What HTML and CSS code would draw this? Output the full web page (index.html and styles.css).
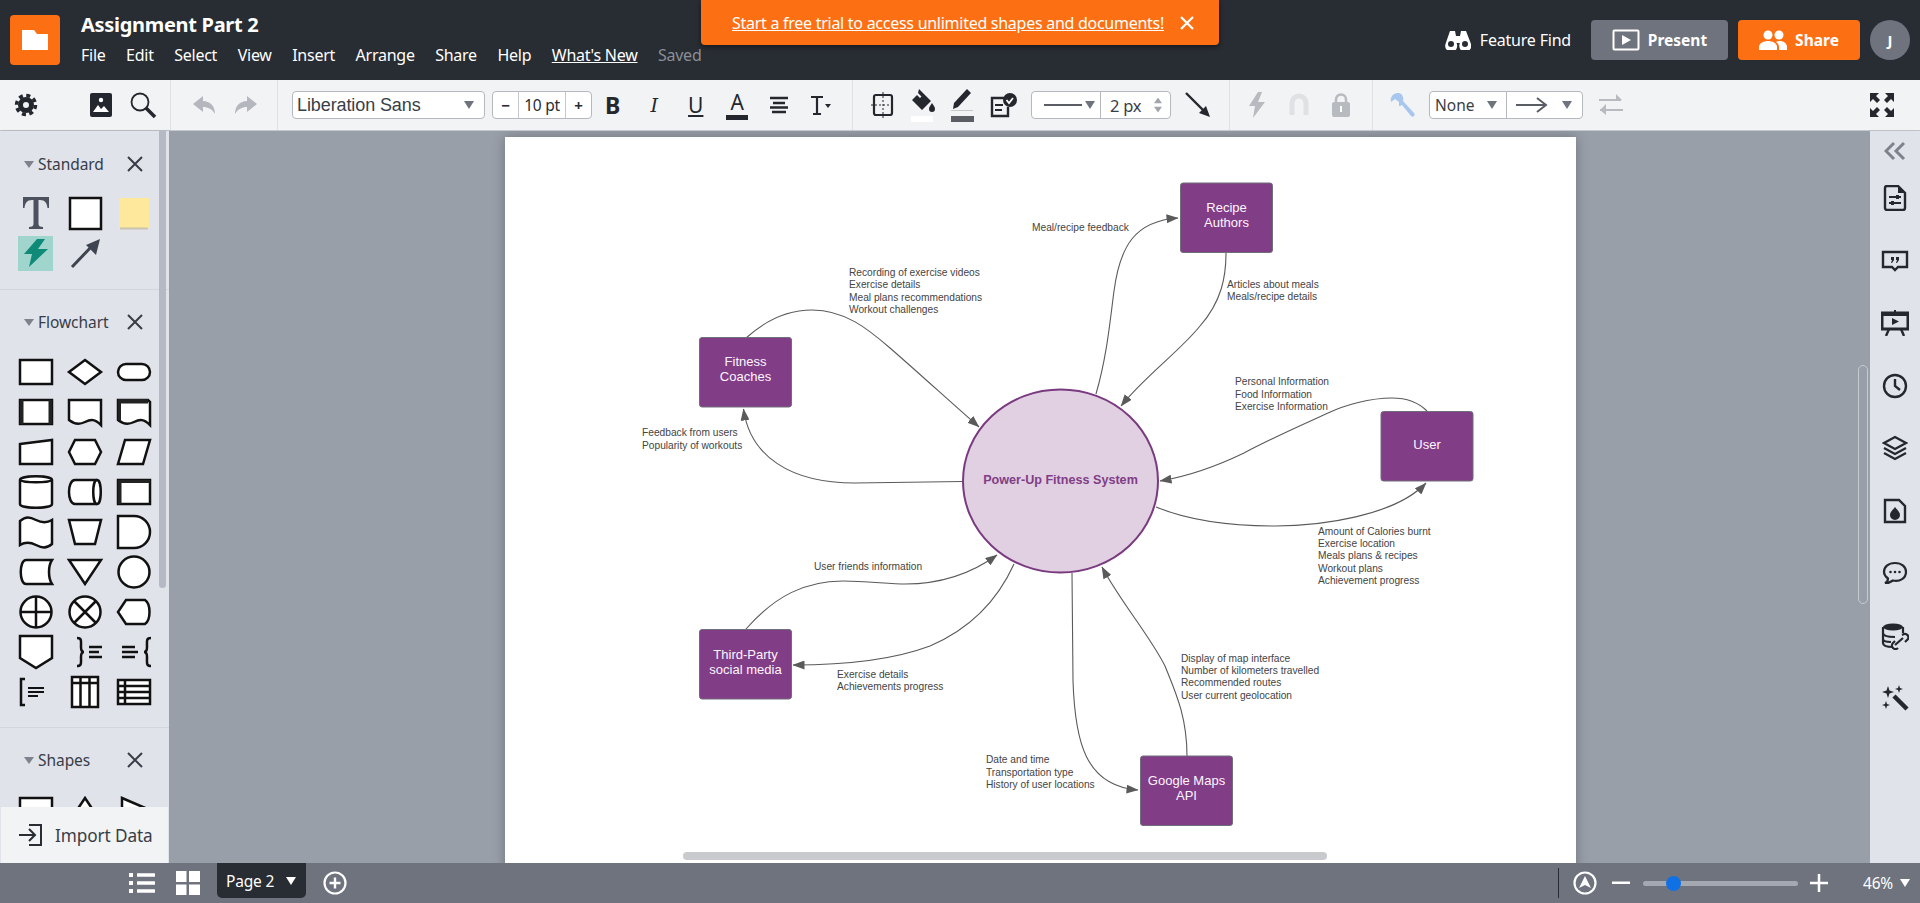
FILE: index.html
```html
<!DOCTYPE html>
<html lang="en">
<head>
<meta charset="utf-8">
<title>Assignment Part 2</title>
<link rel="stylesheet" href="styles.css">
</head>
<body>
<div class="app">
  <header class="topbar">
    <div class="logo"><svg width="26" height="20" viewBox="0 0 26 20"><path fill="#fff" d="M0 0H12L15 4H26V20H0Z"/></svg></div>
    <div class="doc">
      <div class="title">Assignment Part 2</div>
      <nav class="menu">
        <span>File</span><span>Edit</span><span>Select</span><span>View</span><span>Insert</span><span>Arrange</span><span>Share</span><span>Help</span><span class="new">What's New</span><span class="saved">Saved</span>
      </nav>
    </div>
    <div class="actions">
      <span class="find">
        <svg width="26" height="20" viewBox="0 0 26 20"><path fill="#fff" d="M5 1h5l1 5h4l1-5h5l5 13a6 6 0 1 1-11-1h-0.500l-3 0a6 6 0 1 1-11 1Z"/><circle cx="6" cy="14" r="3" fill="#282c33"/><circle cx="20" cy="14" r="3" fill="#282c33"/></svg>
        Feature Find
      </span>
      <span class="btn present">
        <svg width="28" height="22" viewBox="0 0 28 22"><rect x="1.500" y="1.500" width="25" height="19" rx="1" fill="none" stroke="#fff" stroke-width="2"/><path fill="#fff" d="M10 6l9 5-9 5Z"/></svg>
        Present
      </span>
      <span class="btn share">
        <svg width="28" height="20" viewBox="0 0 28 20"><circle cx="9" cy="5" r="4.500" fill="#fff"/><circle cx="20" cy="5" r="4.500" fill="#fff"/><path fill="#fff" d="M0 20v-3c0-4 5-6 9-6s9 2 9 6v3Z"/><path fill="#fff" d="M20 20v-3c0-2-1-4-3-5 1-1 2-1 4-1 3 0 7 2 7 6v3Z"/></svg>
        Share
      </span>
      <span class="avatar">J</span>
    </div>
  </header>

  <div class="banner"><a class="banner-link">Start a free trial to access unlimited shapes and documents!</a>
    <svg class="banner-x" width="16" height="16" viewBox="0 0 16 16"><path d="M2 2L14 14M14 2L2 14" stroke="#fff" stroke-width="2.200"/></svg>
  </div>

  <div class="toolbar">
    <div class="tsec s1">
      <span class="tb"><svg width="24" height="24" viewBox="0 0 24 24"><circle cx="12" cy="12" r="5.500" fill="none" stroke="#24272d" stroke-width="5"/><circle cx="12" cy="12" r="9.500" fill="none" stroke="#24272d" stroke-width="3.500" stroke-dasharray="4 3.460"/></svg></span>
      <span class="tb push"><svg width="24" height="26" viewBox="0 0 24 26"><rect x="1" y="1" width="22" height="24" rx="2" fill="#24272d"/><circle cx="12" cy="8" r="2.200" fill="#fff"/><path fill="#fff" d="M4 20l5-7 3 4 3-3 5 6Z"/></svg></span>
      <span class="tb"><svg width="28" height="28" viewBox="0 0 28 28"><circle cx="11" cy="11" r="8.500" fill="none" stroke="#24272d" stroke-width="1.800"/><path d="M17 17L26 26" stroke="#24272d" stroke-width="3.500"/></svg></span>
    </div>
    <div class="tsec s2">
      <span class="tb"><svg width="24" height="20" viewBox="0 0 24 20"><path fill="#b4b7bd" d="M11 1L1 9l10 8v-5c5 0 9 2 12 7 0-8-5-13-12-13Z"/></svg></span>
      <span class="tb"><svg width="24" height="20" viewBox="0 0 24 20"><path fill="#b4b7bd" d="M13 1l10 8-10 8v-5C8 12 4 14 1 19 1 11 6 6 13 6Z"/></svg></span>
    </div>
    <div class="tsec s3">
      <span class="select font">Liberation Sans<i class="caret"></i></span>
      <span class="stepper"><b>−</b><em>10 pt</em><b>+</b></span>
      <span class="tb glyph bold">B</span>
      <span class="tb glyph ital">I</span>
      <span class="tb glyph under">U</span>
      <span class="tb glyph colorA">A</span>
      <span class="tb"><svg width="20" height="18" viewBox="0 0 20 18"><path d="M1 2H19M4 7H16M1 11.500H19M3 16H17" stroke="#24272d" stroke-width="2.400"/></svg></span>
      <span class="tb"><svg width="24" height="24" viewBox="0 0 24 24"><path d="M3 4H15M9 4V21M5 21H13" stroke="#24272d" stroke-width="2.200" fill="none"/><path d="M17 11H23L20 15Z" fill="#24272d"/></svg></span>
    </div>
    <div class="tsec s4">
      <span class="tb t40"><svg width="24" height="26" viewBox="0 0 24 26"><rect x="3" y="3" width="18" height="20" rx="2" fill="none" stroke="#24272d" stroke-width="2.200"/><path d="M12 0V26M0 13H24" stroke="#24272d" stroke-width="1" stroke-dasharray="2 2"/></svg></span>
      <span class="tb t40"><svg width="26" height="34" viewBox="0 0 26 34"><path fill="#24272d" d="M9 1l12 12-9 9-10-10 5-5 3 3 1.500-1.500-3.500-3.500Z"/><path fill="#24272d" d="M22 15c2 3 3 4 3 6a3 3 0 0 1-6 0c0-2 1-3 3-6Z"/><rect x="1" y="28" width="22" height="6" fill="#fff"/></svg></span>
      <span class="tb t40"><svg width="24" height="34" viewBox="0 0 24 34"><path fill="#24272d" d="M16 1l4 4L7 19l-5 2 1-6Z"/><rect y="22" x="0" width="22" height="1" fill="#c6c8cc"/><rect x="0" y="28" width="23" height="6" fill="#5a5d63"/></svg></span>
      <span class="tb t40"><svg width="28" height="26" viewBox="0 0 28 26"><path fill="none" stroke="#24272d" stroke-width="2.400" d="M15 6H3V24H19V15"/><path d="M6 13H14M6 18H13" stroke="#24272d" stroke-width="2"/><circle cx="21" cy="8" r="7" fill="#24272d"/><path d="M17.500 8l2.500 3 4-5" stroke="#fff" stroke-width="1.800" fill="none"/></svg></span>
      <span class="select line"><span class="line-l"><i class="dash"></i><i class="caret"></i></span><span class="line-r">2 px<i class="spin"></i></span></span>
      <span class="tb t40 after-line"><svg width="26" height="26" viewBox="0 0 26 26"><path d="M1 1L20 20" stroke="#24272d" stroke-width="2.400"/><path d="M25 25L14 21L21 14Z" fill="#24272d"/></svg></span>
    </div>
    <div class="tsec s5">
      <span class="tb"><svg width="16" height="26" viewBox="0 0 16 26"><path fill="#b7babf" d="M9 0L0 14h6L4 26l12-16H9L13 0Z"/></svg></span>
      <span class="tb"><svg width="20" height="24" viewBox="0 0 20 24"><path fill="none" stroke="#dfe1e5" stroke-width="5" d="M3 22V10a7 7 0 0 1 14 0V22"/></svg></span>
      <span class="tb"><svg width="18" height="24" viewBox="0 0 18 24"><path fill="none" stroke="#b7babf" stroke-width="2.500" d="M4 10V6.500a5 5 0 0 1 10 0V10"/><rect x="0" y="9" width="18" height="15" rx="2" fill="#b7babf"/><rect x="8" y="13" width="2" height="6" fill="#fff"/></svg></span>
    </div>
    <div class="tsec s6">
      <span class="tb"><svg width="26" height="26" viewBox="0 0 26 26"><path fill="#a7c7ee" d="M9 1a7 7 0 0 0-7 9l4-3 4 3 0 4a7 7 0 0 0 3-1l9 11c2 2 5-1 3-3L14 9c1-4-1-8-5-8Z"/></svg></span>
      <span class="select ends"><span class="end-l">None<i class="caret"></i></span><span class="end-r"><svg width="32" height="16" viewBox="0 0 32 16"><path d="M0 8H30M21 1L30 8L21 15" fill="none" stroke="#5a5d63" stroke-width="2"/></svg><i class="caret"></i></span></span>
      <span class="tb after-line"><svg width="24" height="22" viewBox="0 0 24 22"><path d="M0 6H22M1 16H24" stroke="#b7babf" stroke-width="2"/><path fill="#b7babf" d="M17 0L23 6L17 7ZM7 10L1 16L7 21Z"/></svg></span>
      <span class="tb full"><svg width="24" height="24" viewBox="0 0 24 24"><path fill="#24272d" d="M0 0H9L6 3L10 7L7 10L3 6L0 9ZM24 0V9L21 6L17 10L14 7L18 3L15 0ZM0 24V15L3 18L7 14L10 17L6 21L9 24ZM24 24H15L18 21L14 17L17 14L21 18L24 15Z"/></svg></span>
    </div>
  </div>

  <div class="work">
    <aside class="lib">
      <section class="libsec first">
        <h3 class="libhead"><i class="tri"></i>Standard<svg class="x" width="16" height="16" viewBox="0 0 16 16"><path d="M1 1L15 15M15 1L1 15" stroke="#383d47" stroke-width="2"/></svg></h3>
        <div class="shapes">
          <svg width="40" height="40" viewBox="0 0 40 40"><path fill="#4b525e" d="M7 4H33V15H31.500C31 10 29 7 24 7H22.500V31C22.500 33 24 34 27 34V36H13V34C16 34 17.500 33 17.500 31V7H16C11 7 9 10 8.500 15H7Z"/></svg>
          <svg class="sh" width="40" height="40" viewBox="0 0 40 40"><rect x="5" y="5" width="31" height="31"/></svg>
          <svg width="40" height="40" viewBox="0 0 40 40"><rect x="5" y="5" width="30" height="30" fill="#fde89b"/><rect x="6" y="34.500" width="28" height="2" fill="#c9c4ae"/></svg>
          <span class="teal"><svg width="26" height="28" viewBox="0 0 26 28"><path fill="#0f8a78" d="M14 0L1 15h8L6 28 25 10H15L22 0Z"/></svg></span>
          <svg width="40" height="40" viewBox="0 0 40 40"><path d="M7 34L28 12" stroke="#3f4550" stroke-width="3"/><path fill="#3f4550" d="M35 6L31 22L21 12Z"/></svg>
        </div>
      </section>
      <section class="libsec">
        <h3 class="libhead"><i class="tri"></i>Flowchart<svg class="x" width="16" height="16" viewBox="0 0 16 16"><path d="M1 1L15 15M15 1L1 15" stroke="#383d47" stroke-width="2"/></svg></h3>
        <div class="shapes sh">
          <svg viewBox="0 0 40 40"><rect x="4" y="8" width="32" height="24"/></svg>
          <svg viewBox="0 0 40 40"><path d="M20 8L36 20L20 32L4 20Z"/></svg>
          <svg viewBox="0 0 40 40"><rect x="4" y="12" width="32" height="16" rx="8"/></svg>

          <svg viewBox="0 0 40 40"><rect x="4" y="8" width="32" height="24"/><path class="solid" d="M4 8H7.500V32H4ZM32.500 8H36V32H32.500Z"/></svg>
          <svg viewBox="0 0 40 40"><path d="M4 8H36V33C30 27 26 27 20 30C14 33 9 32 4 28Z"/></svg>
          <svg viewBox="0 0 40 40"><path d="M4 8H34L36 10V33C30 27 26 27 20 30C14 33 9 32 4 28Z"/><path class="solid" d="M4 7H34V11.500H7V28H4Z"/></svg>

          <svg viewBox="0 0 40 40"><path d="M4 12L36 8V32H4Z"/></svg>
          <svg viewBox="0 0 40 40"><path d="M10 8H30L36 20L30 32H10L4 20Z"/></svg>
          <svg viewBox="0 0 40 40"><path d="M11 8H36L29 32H4Z"/></svg>

          <svg viewBox="0 0 40 40"><path d="M4 8C4 3 36 3 36 8V32C36 37 4 37 4 32Z"/><path d="M4 8C8 11 32 11 36 8" fill="none"/></svg>
          <svg viewBox="0 0 40 40"><path d="M10 8H32C37 8 37 32 32 32H10C2 32 2 8 10 8Z"/><path d="M32 8C27 8 27 32 32 32" fill="none"/></svg>
          <svg viewBox="0 0 40 40"><rect x="4" y="8" width="32" height="24"/><path class="solid" d="M4 8H36V11H7.500V32H4Z"/></svg>

          <svg viewBox="0 0 40 40"><path d="M4 9C10 4 14 5 20 8C26 11 31 11 36 8V32C30 37 26 36 20 33C14 30 9 30 4 33Z"/></svg>
          <svg viewBox="0 0 40 40"><path d="M4 8H36L30 32H10Z"/></svg>
          <svg viewBox="0 0 40 40"><path d="M4 4H20A16 16 0 0 1 20 36H4Z"/></svg>

          <svg viewBox="0 0 40 40"><path d="M10 8H36C32 14 32 26 36 32H10C3 32 3 8 10 8Z"/></svg>
          <svg viewBox="0 0 40 40"><path d="M4 8H36L20 32Z"/></svg>
          <svg viewBox="0 0 40 40"><circle cx="20" cy="20" r="15.500"/></svg>

          <svg viewBox="0 0 40 40"><circle cx="20" cy="20" r="15.500"/><path d="M20 4.500V35.500M4.500 20H35.500"/></svg>
          <svg viewBox="0 0 40 40"><circle cx="20" cy="20" r="15.500"/><path d="M9 9L31 31M31 9L9 31"/></svg>
          <svg viewBox="0 0 40 40"><path d="M12 8H31C37 12 37 28 31 32H12L4 20Z"/></svg>

          <svg viewBox="0 0 40 40"><path d="M4 4H36V26L20 36L4 26Z"/></svg>
          <svg viewBox="0 0 40 40"><path class="open" d="M12 6C17 6 16 9 16 15C16 18 17 20 19 20C17 20 16 22 16 25C16 31 17 34 12 34"/><path class="open" d="M24 15H37M24 20H34M24 25H37"/></svg>
          <svg viewBox="0 0 40 40"><path class="open" d="M37 6C32 6 33 9 33 15C33 18 32 20 30 20C32 20 33 22 33 25C33 31 32 34 37 34"/><path class="open" d="M8 15H21M8 20H24M8 25H21"/></svg>

          <svg viewBox="0 0 40 40"><path class="open" d="M9 7H5V33H9"/><path class="open thin" d="M12 16H28M12 20H28M12 24H22"/></svg>
          <svg viewBox="0 0 40 40"><rect x="7" y="5" width="26" height="30"/><path class="open" d="M7 11H33M15.500 5V35M24.500 5V35"/></svg>
          <svg viewBox="0 0 40 40"><rect x="4" y="8" width="32" height="24"/><path class="open" d="M4 14H36M4 20H36M4 26H36M11 8V32"/></svg>
        </div>
      </section>
      <section class="libsec last">
        <h3 class="libhead"><i class="tri"></i>Shapes<svg class="x" width="16" height="16" viewBox="0 0 16 16"><path d="M1 1L15 15M15 1L1 15" stroke="#383d47" stroke-width="2"/></svg></h3>
        <div class="shapes sh">
          <svg viewBox="0 0 40 40"><rect x="4" y="8" width="32" height="24"/></svg>
          <svg viewBox="0 0 40 40"><path d="M20 8L36 32H4Z"/></svg>
          <svg viewBox="0 0 40 40"><path d="M8 8L36 20L8 32Z"/></svg>
        </div>
      </section>
      <div class="libscroll"></div>
      <div class="import">
        <svg width="24" height="22" viewBox="0 0 24 22"><path d="M10 1H22V21H10" fill="none" stroke="#282c33" stroke-width="2"/><path d="M0 11H15M10 5L16 11L10 17" fill="none" stroke="#282c33" stroke-width="2"/></svg>
        Import Data
      </div>
    </aside>

    <main class="canvas">
      <div class="page">
        <svg class="diagram" width="1071" height="727" viewBox="505 136 1071 727">
          <defs>
            <marker id="ah" markerUnits="userSpaceOnUse" markerWidth="12" markerHeight="9" refX="11.500" refY="4.500" orient="auto"><path d="M0 0L12 4.500L0 9Z" fill="#5a5a5a"/></marker>
          </defs>
          <g class="links">
            <path marker-end="url(#ah)" d="M746 337C767 318 790 309 812 309C845 309 868 328 890 347C912 366 955 405 979 426"/>
            <path marker-end="url(#ah)" d="M962.500 480.500L855 482C790 482 750 455 743.500 408"/>
            <path marker-end="url(#ah)" d="M1096 393C1107 355 1110 320 1114 290C1120 245 1135 220 1178 217"/>
            <path marker-end="url(#ah)" d="M1226 252C1226 275 1222 300 1200 325C1180 350 1145 375 1121 405"/>
            <path marker-end="url(#ah)" d="M1427 410C1417 400 1405 397 1392 397C1370 397 1345 404 1328 412C1300 425 1270 438 1244 452C1215 466 1190 475 1160 480"/>
            <path marker-end="url(#ah)" d="M1156 506C1190 520 1235 525 1275 525C1320 525 1395 515 1426 482"/>
            <path marker-end="url(#ah)" d="M1187 755C1187 715 1175 690 1165 665C1150 635 1120 600 1102 566"/>
            <path marker-end="url(#ah)" d="M1072 572L1073 680C1075 740 1085 785 1138 789"/>
            <path marker-end="url(#ah)" d="M746 628C775 595 805 580 843 580C865 580 890 583 905 583C945 583 975 570 997 554"/>
            <path marker-end="url(#ah)" d="M1014 563C995 605 965 630 930 645C890 660 840 664 793 664"/>
          </g>
          <ellipse class="hub" cx="1060.500" cy="480" rx="97.500" ry="91.500"/>
          <text class="hubt" x="1060.500" y="483">Power-Up Fitness System</text>

          <rect class="node" x="699.500" y="336.500" width="92" height="69.500" rx="2.500"/>
          <text class="nodet" x="745.500" y="365">Fitness</text><text class="nodet" x="745.500" y="380">Coaches</text>
          <rect class="node" x="1180.500" y="182" width="92" height="69.500" rx="2.500"/>
          <text class="nodet" x="1226.500" y="211">Recipe</text><text class="nodet" x="1226.500" y="226">Authors</text>
          <rect class="node" x="1381" y="410.500" width="92" height="69.500" rx="2.500"/>
          <text class="nodet" x="1427" y="448">User</text>
          <rect class="node" x="699.500" y="628.500" width="92" height="69.500" rx="2.500"/>
          <text class="nodet" x="745.500" y="658">Third-Party</text><text class="nodet" x="745.500" y="673">social media</text>
          <rect class="node" x="1140.500" y="755" width="92" height="69.500" rx="2.500"/>
          <text class="nodet" x="1186.500" y="784">Google Maps</text><text class="nodet" x="1186.500" y="798.500">API</text>

          <g class="labels">
            <text x="1032" y="230">Meal/recipe feedback</text>
            <text x="849" y="275">Recording of exercise videos</text><text x="849" y="287">Exercise details</text><text x="849" y="300">Meal plans recommendations</text><text x="849" y="312">Workout challenges</text>
            <text x="1227" y="287">Articles about meals</text><text x="1227" y="299">Meals/recipe details</text>
            <text x="1235" y="384">Personal Information</text><text x="1235" y="397">Food Information</text><text x="1235" y="409">Exercise Information</text>
            <text x="642" y="435">Feedback from users</text><text x="642" y="448">Popularity of workouts</text>
            <text x="1318" y="534">Amount of Calories burnt</text><text x="1318" y="546">Exercise location</text><text x="1318" y="558">Meals plans &amp; recipes</text><text x="1318" y="571">Workout plans</text><text x="1318" y="583">Achievement progress</text>
            <text x="814" y="569">User friends information</text>
            <text x="837" y="677">Exercise details</text><text x="837" y="689">Achievements progress</text>
            <text x="1181" y="661">Display of map interface</text><text x="1181" y="673">Number of kilometers travelled</text><text x="1181" y="685">Recommended routes</text><text x="1181" y="698">User current geolocation</text>
            <text x="986" y="762">Date and time</text><text x="986" y="775">Transportation type</text><text x="986" y="787">History of user locations</text>
          </g>
        </svg>
      </div>
      <div class="hscroll"></div>
      <div class="vscroll"></div>
    </main>

    <aside class="rail">
      <span class="chev"><svg width="22" height="20" viewBox="0 0 22 20"><path d="M10 2L2 10L10 18M20 2L12 10L20 18" fill="none" stroke="#7d828c" stroke-width="3"/></svg></span>
      <span class="ri"><svg width="24" height="26" viewBox="0 0 24 26"><path fill="none" stroke="#24272d" stroke-width="2.400" d="M2 3a2 2 0 0 1 2-2H15L22 8V23a2 2 0 0 1-2 2H4a2 2 0 0 1-2-2Z"/><path d="M15 1V8H22" fill="#24272d"/><path d="M6 12H18M6 18H18" stroke="#24272d" stroke-width="1.800"/><path d="M13 10h3v4h-3ZM8 16h3v4H8Z" fill="#24272d"/></svg></span>
      <span class="ri"><svg width="28" height="22" viewBox="0 0 28 22"><path fill="none" stroke="#24272d" stroke-width="2.400" d="M2 2H26V17H17L14 20L11 17H2Z"/><path d="M10 7h3v3l-2 3h-1l1-3h-1ZM15 7h3v3l-2 3h-1l1-3h-1Z" fill="#24272d"/></svg></span>
      <span class="ri"><svg width="28" height="26" viewBox="0 0 28 26"><path d="M14 0V3" stroke="#24272d" stroke-width="2"/><path d="M1 3H27V19H1Z" fill="none" stroke="#24272d" stroke-width="3"/><path d="M1 3H27V6H1ZM11 8L18 11.500L11 15Z" fill="#24272d"/><path d="M8 19L5 26M20 19L23 26" stroke="#24272d" stroke-width="2.400"/></svg></span>
      <span class="ri"><svg width="26" height="26" viewBox="0 0 26 26"><circle cx="13" cy="13" r="11" fill="none" stroke="#24272d" stroke-width="2.400"/><path d="M13 6V13L18 17" fill="none" stroke="#24272d" stroke-width="2.400"/></svg></span>
      <span class="ri"><svg width="26" height="26" viewBox="0 0 26 26"><path d="M13 2L24 8L13 14L2 8Z" fill="none" stroke="#24272d" stroke-width="2.200"/><path d="M2 13L13 19L24 13M2 18L13 24L24 18" fill="none" stroke="#24272d" stroke-width="2.200"/></svg></span>
      <span class="ri"><svg width="24" height="26" viewBox="0 0 24 26"><path fill="none" stroke="#24272d" stroke-width="2.400" d="M2 2H16L22 8V24H2Z"/><path fill="#24272d" d="M12 9c3 4 5 5 5 8a5 5 0 0 1-10 0c0-3 2-4 5-8Z"/></svg></span>
      <span class="ri"><svg width="26" height="24" viewBox="0 0 26 24"><path fill="none" stroke="#24272d" stroke-width="2.200" d="M13 2C6 2 2 6 2 11C2 14 4 16 6 17.500C6 19 5 21 3 22C7 22 9 21 11 19.500C18 21 24 17 24 11C24 6 20 2 13 2Z"/><circle cx="8.500" cy="11" r="1.300" fill="#24272d"/><circle cx="13" cy="11" r="1.300" fill="#24272d"/><circle cx="17.500" cy="11" r="1.300" fill="#24272d"/></svg></span>
      <span class="ri"><svg width="28" height="28" viewBox="0 0 28 28"><ellipse cx="12" cy="5" rx="10" ry="3.500" fill="#24272d"/><path d="M2 5V21C2 24 7 25 12 25M22 5V11M2 11C2 14 8 15 14 15M2 17C2 19 6 20 10 20" fill="none" stroke="#24272d" stroke-width="2.200"/><path d="M14 23L22 16M17 26a3.500 3.500 0 0 1-5-5l2-2M21 13l2-1a3.500 3.500 0 0 1 4 5l-3 3" fill="none" stroke="#24272d" stroke-width="2.200"/></svg></span>
      <span class="ri"><svg width="28" height="28" viewBox="0 0 28 28"><path d="M13 12L26 25" stroke="#24272d" stroke-width="4.500"/><path fill="#24272d" d="M7 2l1.500 4.500L13 8 8.500 9.500 7 14 5.500 9.500 1 8 5.500 6.500ZM18 1l1 3 3 1-3 1-1 3-1-3-3-1 3-1ZM5 17l1 3 3 1-3 1-1 3-1-3-3-1 3-1Z"/></svg></span>
    </aside>
  </div>

  <footer class="bottom">
    <span class="bi list"><svg width="26" height="22" viewBox="0 0 26 22"><path d="M8 3H26M8 11H26M8 19H26" stroke="#fff" stroke-width="3.500"/><path d="M0 1h4v4H0ZM0 9h4v4H0ZM0 17h4v4H0Z" fill="#fff"/></svg></span>
    <span class="bi grid"><svg width="24" height="24" viewBox="0 0 24 24"><path fill="#fff" d="M0 0h10.500v11H0ZM13 0h11v11H13ZM0 13.500h10.500V24H0ZM13 13.500h11V24H13Z"/></svg></span>
    <span class="pagetab">Page 2<i class="caret white"></i></span>
    <span class="bi addp"><svg width="24" height="24" viewBox="0 0 24 24"><circle cx="12" cy="12" r="10.500" fill="none" stroke="#fff" stroke-width="2.200"/><path d="M12 6.500V17.500M6.500 12H17.500" stroke="#fff" stroke-width="2.400"/></svg></span>
    <span class="zoombox">
      <span class="vsep"></span>
      <svg class="nav" width="24" height="24" viewBox="0 0 24 24"><circle cx="12" cy="12" r="10.500" fill="none" stroke="#fff" stroke-width="2.200"/><path d="M12 5L18 17L12 14L6 17Z" fill="#fff"/></svg>
      <svg class="minus" width="18" height="4" viewBox="0 0 18 4"><rect width="18" height="2.500" y="0.500" fill="#fff"/></svg>
      <span class="slider"><i class="knob"></i></span>
      <svg class="plus" width="18" height="18" viewBox="0 0 18 18"><path d="M0 9H18M9 0V18" stroke="#fff" stroke-width="2.500"/></svg>
      <span class="pct">46%</span><i class="caret white"></i>
    </span>
  </footer>
</div>
</body>
</html>
```
FILE: styles.css
```css
*{box-sizing:border-box}
html,body{margin:0;padding:0;height:100%;overflow:hidden}
body{font-family:"Noto Sans","Open Sans",sans-serif;color:#282c33;background:#999fa9}
.app{position:relative;width:1920px;height:903px;display:flex;flex-direction:column;overflow:hidden}

.topbar{height:80px;background:#282c33;display:flex;align-items:flex-start;color:#fff;flex:none}
.logo{width:50px;height:50px;margin:15px 0 0 10px;background:#fc7013;border-radius:4px;display:flex;align-items:center;justify-content:center}
.doc{margin-left:21px;padding-top:11px}
.title{font-size:20px;font-weight:700;line-height:28px;letter-spacing:-.3px}
.menu{display:flex;gap:20.500px;font-size:16px;line-height:22px;margin-top:5px;letter-spacing:-.25px}
.menu .new{text-decoration:underline;margin-left:0}
.menu .saved{color:#8b8f97}
.actions{margin-left:auto;display:flex;align-items:center;height:80px;padding-right:10px;font-size:16px}
.find{display:flex;align-items:center;gap:9px;margin-right:20px;letter-spacing:-.2px}
.btn{height:40px;border-radius:4px;display:flex;align-items:center;justify-content:center;font-weight:700;gap:8px;font-size:15.500px}
.present{width:137px;background:#6e737e;margin-right:10px}
.share{width:122px;background:#fc7013;margin-right:10px}
.avatar{width:40px;height:40px;border-radius:50%;background:#6e737e;display:flex;align-items:center;justify-content:center;font-weight:700;font-size:15px}

.banner{position:absolute;left:701px;top:0;width:518px;height:45px;background:#fc7013;border-radius:0 0 4px 4px;box-shadow:0 2px 5px rgba(0,0,0,.45);display:flex;align-items:center;padding-left:31px;color:#fff;z-index:5}
.banner-link{font-size:16px;text-decoration:underline;letter-spacing:-.27px;white-space:nowrap}
.banner-x{margin-left:15px}

.toolbar{height:51px;background:#f2f3f5;border-bottom:1px solid #c5c8cf;display:flex;flex:none}
.tsec{display:flex;align-items:center;border-right:1px solid #dfe1e5;height:50px}
.s1{width:171px;padding-left:5px}
.s2{width:107px;padding-left:12px}
.s3{width:575px;padding-left:14px}
.s3 .tb{width:41.500px}
.s4{width:377px;padding-left:10px}
.s5{width:143px;padding-left:6px}
.s6{flex:1;border-right:0;padding-left:8px;padding-right:17px}
.tb{width:42px;height:40px;display:flex;align-items:center;justify-content:center;flex:none}
.t40{width:40px}
.after-line{margin-left:7px}
.push{margin-left:33px;margin-right:0}
.select{display:flex;align-items:center;height:28px;background:#fff;border:1px solid #b5b8bf;border-radius:4px;flex:none}
.font{width:193px;padding:0 6px 0 4px;font-family:"Liberation Sans",sans-serif;font-size:18px;color:#3a3e46;justify-content:space-between;letter-spacing:-.1px}
.caret{display:inline-block;width:0;height:0;border-left:5.500px solid transparent;border-right:5.500px solid transparent;border-top:8px solid #6e737e;margin-right:4px}
.caret.white{border-top-color:#fff;margin:0}
.stepper{display:flex;width:100px;height:28px;margin-left:7px;background:#fff;border:1px solid #b5b8bf;border-radius:4px;flex:none;font-size:15.500px;align-items:center}
.stepper b{width:25px;text-align:center;font-weight:700;font-size:15px}
.stepper em{font-style:normal;flex:1;text-align:center;height:26px;line-height:26px;border-left:1px solid #c5c8cf;border-right:1px solid #c5c8cf;letter-spacing:-.3px}
.glyph{color:#24272d}
.bold{font-size:23px;font-weight:700}
.ital{font-family:"DejaVu Serif",serif;font-style:italic;font-size:19px}
.under{font-size:21px;text-decoration:underline;font-weight:400}
.colorA{font-size:21px;flex-direction:column;line-height:22px;position:relative}
.colorA::after{content:"";display:block;width:22px;height:5px;background:#24272d;margin-top:2px}
.line{width:140px;margin-left:8px}
.line-l{width:69px;display:flex;align-items:center;justify-content:space-between;padding:0 5px 0 12px;height:26px;border-right:1px solid #b5b8bf}
.dash{display:block;width:38px;height:2px;background:#5a5d63}
.line .caret{margin-right:0;border-left-width:5px;border-right-width:5px}
.line-r{flex:1;display:flex;justify-content:space-between;align-items:center;padding:0 8px 0 9px;font-size:16.500px;letter-spacing:-.3px;color:#3a3e46}
.spin{display:block;width:8px;height:15px;background:#a2a5ab;clip-path:polygon(50% 0,100% 38%,0 38%,0 62%,100% 62%,50% 100%,0 62%,0 38%)}
.s6 .select{margin-left:6px}
.ends{width:154px}
.end-l{width:77px;height:26px;border-right:1px solid #b5b8bf;display:flex;align-items:center;justify-content:space-between;padding:0 9px 0 5px;font-size:15.500px;color:#3a3e46}
.end-l .caret,.end-r .caret{margin:0}
.end-r{flex:1;display:flex;align-items:center;justify-content:space-between;padding:0 10px 0 9px}
.full{margin-left:auto}

.work{flex:1;display:flex;min-height:0}
.lib{width:169px;background:#e0e3ea;position:relative;overflow:hidden;flex:none;box-shadow:1px 0 2px rgba(0,0,0,.2)}
.libsec{border-bottom:1px solid #d1d5dd;padding:17px 0 15px}
.libsec.first{padding:18px 0 16px;height:159px}
.libsec.last{border:0;padding-top:17px}
.libhead{margin:0;display:flex;align-items:center;height:30px;font-size:15.500px;font-weight:400;color:#383d47;padding-left:24px;position:relative;letter-spacing:-.05px}
.tri{width:0;height:0;border-left:5px solid transparent;border-right:5px solid transparent;border-top:7px solid #7d828c;margin-right:4px}
.x{position:absolute;left:127px;top:7px}
.shapes{display:grid;grid-template-columns:repeat(3,49px);grid-auto-rows:40px;padding-left:11px;margin-top:15px;justify-items:center;align-items:center}
.first .shapes{margin-top:14px}
.shapes svg{width:40px;height:40px}
.sh rect,.sh path,.sh circle{fill:#fff;stroke:#111;stroke-width:2.500}
.sh path.solid{fill:#222;stroke:none}
.sh path.open{fill:none}
.sh path.thin{stroke-width:1.800}
.teal{width:35px;height:35px;background:#9fd5cc;display:flex;align-items:center;justify-content:center;justify-self:center}
.teal svg{width:26px;height:28px}
.libscroll{position:absolute;left:159px;top:0;width:7px;height:457px;background:#b4b9c4;border-radius:0 0 4px 4px}
.import{position:absolute;left:1px;right:1px;bottom:0;height:56px;background:#f2f3f5;display:flex;align-items:center;gap:12px;padding-left:18px;font-size:17.200px;color:#383d47;letter-spacing:-.1px}

.canvas{flex:1;position:relative;overflow:hidden;background:#999fa9;min-width:0}
.page{width:1071px;height:760px;margin:6px 0 0 336px;background:#fff;box-shadow:0 0 12px rgba(0,0,0,.28)}
.diagram{display:block}
.links path{fill:none;stroke:#5a5a5a;stroke-width:1.100}
.hub{fill:#e0d0e1;stroke:#7a3a80;stroke-width:2}
.hubt{font:700 12.600px "Liberation Sans",sans-serif;fill:#823d87;text-anchor:middle}
.node{fill:#823d87;stroke:#6f6f7a;stroke-width:1}
.nodet{font:13px "Liberation Sans",sans-serif;fill:#fdf6ff;text-anchor:middle}
.labels text{font:10.200px "Liberation Sans",sans-serif;fill:#444}
.hscroll{position:absolute;left:514px;top:721px;width:644px;height:8px;background:#c8cacd;border-radius:4px}
.vscroll{position:absolute;left:1689px;top:234px;width:10px;height:239px;border:1px solid #c6cad1;border-radius:5px}

.rail{width:50px;background:#e0e3ea;display:flex;flex-direction:column;align-items:center;flex:none;box-shadow:-1px 0 2px rgba(0,0,0,.1)}
.chev{height:36px;padding-top:10px;display:flex;align-items:flex-start}
.ri{height:62.500px;display:flex;align-items:center;justify-content:center;flex:none}

.bottom{height:40px;background:#6e737e;display:flex;align-items:flex-start;color:#fff;flex:none;padding-left:129px;position:relative;z-index:2}
.bi{display:flex;align-items:center;height:40px;flex:none}
.bi.grid{margin-left:21px}
.pagetab{margin-left:17px;width:89px;height:35px;background:#282c33;border-radius:0 0 5px 5px;display:flex;align-items:center;padding-left:9px;gap:12px;font-size:15.500px;letter-spacing:-.2px}
.addp{margin-left:17px}
.zoombox{margin-left:auto;display:flex;align-items:center;height:40px;padding-right:10px}
.vsep{width:1px;height:30px;background:#282c33;margin-right:14px}
.nav{margin-right:15px}
.minus{margin-right:13px}
.slider{position:relative;width:155px;height:5px;background:#a4a8b1;border-radius:3px;margin-right:12px}
.knob{position:absolute;left:23px;top:-5px;width:15px;height:15px;border-radius:50%;background:#1071e5}
.plus{margin-right:35px}
.pct{font-size:15.500px;margin-right:7px;letter-spacing:-.2px}
```
